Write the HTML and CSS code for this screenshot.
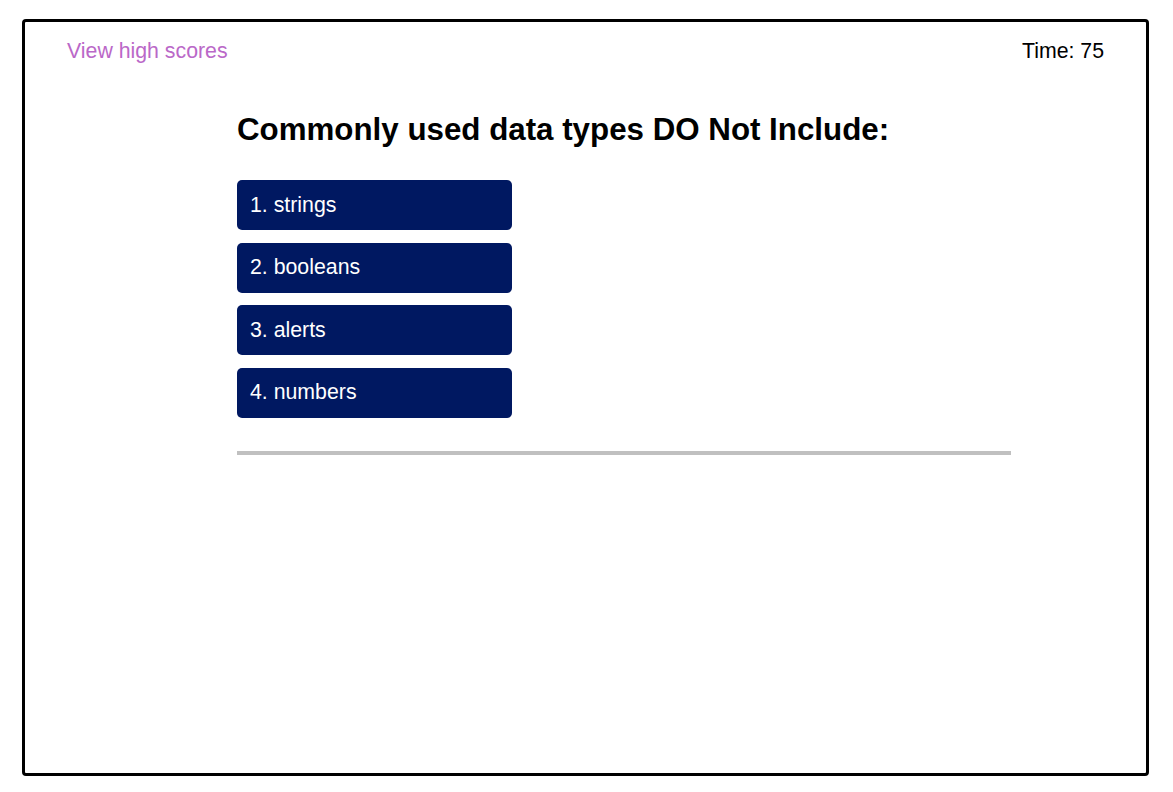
FILE: index.html
```html
<!DOCTYPE html>
<html>
<head>
<meta charset="utf-8">
<link rel="stylesheet" href="styles.css">
</head>
<body>
<div class="frame">
  <header class="top">
    <a class="scores" href="#">View high scores</a>
    <div class="timer">Time: 75</div>
  </header>
  <main class="quiz">
    <h1 class="question">Commonly used data types DO Not Include:</h1>
    <div class="choices">
      <button class="choice">1. strings</button>
      <button class="choice">2. booleans</button>
      <button class="choice">3. alerts</button>
      <button class="choice">4. numbers</button>
    </div>
    <hr class="rule">
  </main>
</div>
</body>
</html>
```
FILE: styles.css
```css
html, body {
  margin: 0;
  padding: 0;
  background: #fff;
}
body {
  font-family: "Liberation Sans", Arial, sans-serif;
  padding: 19px 24px 16px 22px;
}
.frame {
  box-sizing: border-box;
  width: 1127px;
  height: 757px;
  border: 3px solid #000;
  border-radius: 4px;
}
.top {
  display: flex;
  justify-content: space-between;
  padding: 17px 42px 0 42px;
  font-size: 21.3px;
  line-height: 24px;
}
.scores {
  color: #ba68c8;
  text-decoration: none;
}
.timer {
  color: #000;
}
.quiz {
  margin-left: 212px;
  width: 774px;
  padding-top: 49px;
}
.question {
  margin: 0 0 32px 0;
  font-size: 31.3px;
  line-height: 36px;
  font-weight: bold;
  color: #000;
}
.choices {
  display: flex;
  flex-direction: column;
  align-items: flex-start;
  gap: 12.67px;
}
.choice {
  box-sizing: border-box;
  width: 275px;
  height: 50px;
  padding: 0 13px;
  text-align: left;
  border: none;
  border-radius: 5px;
  background: #001861;
  color: #fff;
  font-family: "Liberation Sans", Arial, sans-serif;
  font-size: 21.3px;
}
.rule {
  margin: 33px 0 0 0;
  height: 4px;
  border: none;
  background: #c0c0c0;
}
```
